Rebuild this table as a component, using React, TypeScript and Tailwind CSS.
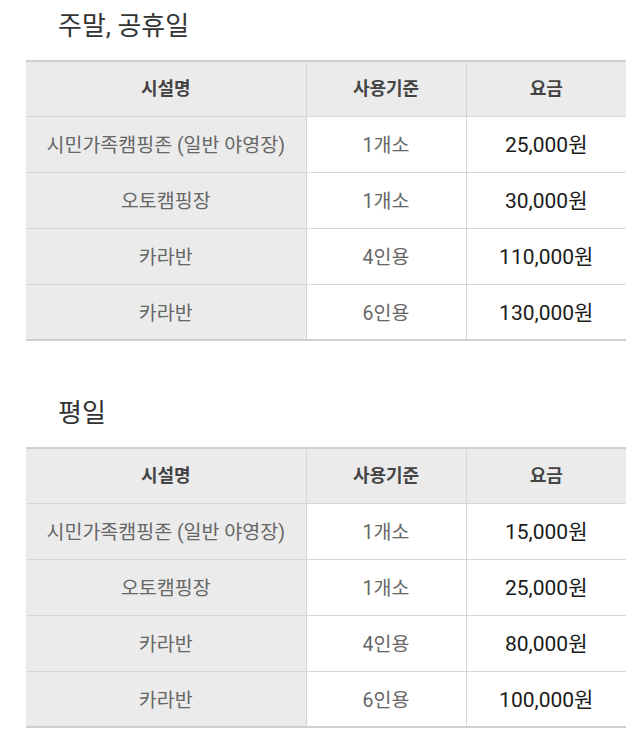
import React from "react";

interface Row {
  name: string;
  unit: string;
  price: string;
}

const WEEKEND: Row[] = [
  { name: "시민가족캠핑존 (일반 야영장)", unit: "1개소", price: "25,000원" },
  { name: "오토캠핑장", unit: "1개소", price: "30,000원" },
  { name: "카라반", unit: "4인용", price: "110,000원" },
  { name: "카라반", unit: "6인용", price: "130,000원" },
];

const WEEKDAY: Row[] = [
  { name: "시민가족캠핑존 (일반 야영장)", unit: "1개소", price: "15,000원" },
  { name: "오토캠핑장", unit: "1개소", price: "25,000원" },
  { name: "카라반", unit: "4인용", price: "80,000원" },
  { name: "카라반", unit: "6인용", price: "100,000원" },
];

function PriceTable({ rows }: { rows: Row[] }) {
  return (
    <table className="w-[600px] ml-[26px] border-collapse table-fixed border-t-2 border-b-2 border-[#cfcfcf]">
      <colgroup>
        <col className="w-[280px]" />
        <col className="w-[160px]" />
        <col className="w-[160px]" />
      </colgroup>
      <thead>
        <tr className="h-[55px] bg-[#ebebeb] text-[#444] text-[18px] font-bold">
          <th className="border-r border-[#d6d6d6]">시설명</th>
          <th className="border-r border-[#d6d6d6]">사용기준</th>
          <th>요금</th>
        </tr>
      </thead>
      <tbody>
        {rows.map((r, i) => (
          <tr key={i} className="h-[56px] border-t border-[#d6d6d6] text-[19.5px]">
            <td className="bg-[#ebebeb] text-center text-[#666] border-r border-[#d6d6d6] pt-[3px]">{r.name}</td>
            <td className="text-center text-[#666] border-r border-[#d6d6d6] pt-[3px]">{r.unit}</td>
            <td className="text-center text-[#1a1a1a] text-[21px] font-normal pt-[3px]">{r.price}</td>
          </tr>
        ))}
      </tbody>
    </table>
  );
}

export default function App() {
  return (
    <div
      className="w-[640px] min-h-[738px] bg-white pt-[11px]"
      style={{ fontFamily: 'Roboto, "Noto Sans CJK KR", "Noto Sans", sans-serif' }}
    >
      <h2 className="pl-[58px] text-[26px] leading-[30px] text-[#333] font-normal">주말, 공휴일</h2>
      <div className="mt-[19px]">
        <PriceTable rows={WEEKEND} />
      </div>
      <h2 className="pl-[58px] mt-[57px] text-[26px] leading-[30px] text-[#333] font-normal">평일</h2>
      <div className="mt-[19px]">
        <PriceTable rows={WEEKDAY} />
      </div>
    </div>
  );
}
